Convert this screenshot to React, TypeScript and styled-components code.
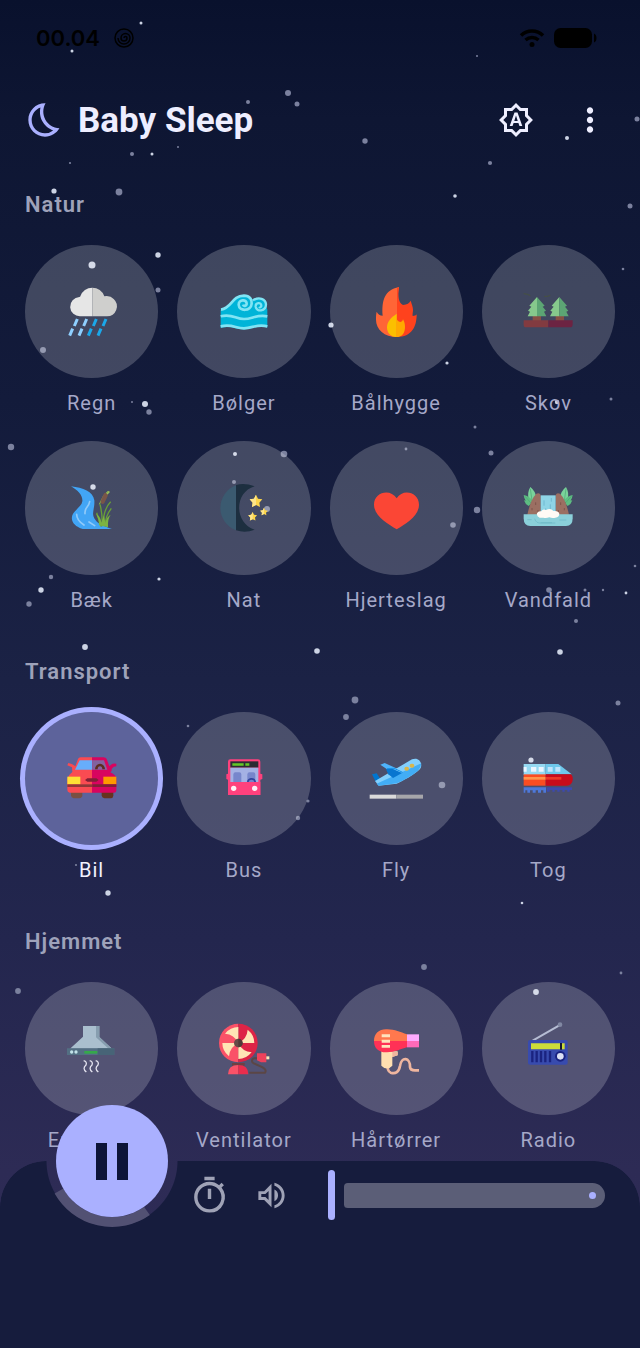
import React, { useState } from "react";
import styled, { createGlobalStyle } from "styled-components";
import {
  MdMoreVert,
  MdOutlineBedtime,
  MdOutlineBrightnessAuto,
  MdOutlineTimer,
  MdOutlineVolumeUp,
} from "react-icons/md";

const GlobalStyle = createGlobalStyle`
  * { box-sizing: border-box; }
  body { margin: 0; background: #161c3d; }
  button { font: inherit; color: inherit; background: none; border: 0; padding: 0; cursor: pointer; }
`;

const Screen = styled.div`
  position: relative;
  display: flex;
  flex-direction: column;
  min-height: 100vh;
  overflow: hidden;
  font-family: Roboto, sans-serif;
  color: #eeeeff;
  background: linear-gradient(
    180deg,
    #09112d 0,
    #0e1633 120px,
    #131b3b 400px,
    #1b2245 680px,
    #23264e 940px,
    #2d2b55 1170px,
    #302c58 100%
  );
`;

const Sky = styled.svg`
  position: absolute;
  inset: 0;
  width: 100%;
  height: 100%;
  pointer-events: none;
`;

const StatusBar = styled.div`
  position: relative;
  display: flex;
  align-items: center;
  gap: 14px;
  height: 76px;
  padding: 0 43px 0 36px;
  color: #000;
`;

const Clock = styled.time`
  font: 600 22px/28px Inter, sans-serif;
`;

const StatusIcons = styled.div`
  display: flex;
  align-items: center;
  gap: 9px;
  margin-left: auto;
`;

const Header = styled.header`
  position: relative;
  display: flex;
  align-items: center;
  height: 88px;
  padding: 0 26px 0 25px;
`;

const Brand = styled.div`
  display: flex;
  align-items: center;
  gap: 13px;
  flex: 1;
  svg { color: #aab0ff; }
`;

const Title = styled.h1`
  margin: 0;
  padding-top: 2px;
  font-size: 35px;
  line-height: 44px;
  font-weight: 700;
`;

const HeaderActions = styled.div`
  display: flex;
  gap: 26px;
`;

const IconButton = styled.button<{ $muted?: boolean }>`
  display: grid;
  place-items: center;
  width: 48px;
  height: 48px;
  color: ${(p) => (p.$muted ? "#9fa2b6" : "#eeeeff")};
`;

const Library = styled.main`
  position: relative;
  display: flex;
  flex-direction: column;
  flex: 1;
  gap: 44px;
  padding: 26px 25px 8px;
`;

const SectionTitle = styled.h2`
  margin: 0 0 25px;
  font-size: 22px;
  line-height: 30px;
  font-weight: 600;
  letter-spacing: 1px;
  color: #9ea2ba;
`;

const SoundGrid = styled.div`
  display: grid;
  grid-template-columns: repeat(4, minmax(0, 1fr));
  gap: 25px 19px;
`;

const Disc = styled.span<{ $active: boolean }>`
  display: grid;
  place-items: center;
  width: 100%;
  aspect-ratio: 1;
  border-radius: 50%;
  background: ${(p) => (p.$active ? "#5d639b" : "rgba(255, 255, 255, 0.2)")};
  box-shadow: ${(p) => (p.$active ? "0 0 0 5px #aab0ff" : "none")};
`;

const SoundLabel = styled.span<{ $active: boolean }>`
  font-size: 20px;
  line-height: 26px;
  letter-spacing: 1px;
  color: ${(p) => (p.$active ? "#f2f2ff" : "#a5a8c8")};
`;

const SoundTile = styled.button`
  display: flex;
  flex-direction: column;
  align-items: center;
  gap: 12px;
`;

const Player = styled.footer`
  position: relative;
  display: flex;
  align-items: center;
  height: 187px;
  padding: 0 35px 119px 185px;
  &::before {
    content: "";
    position: absolute;
    inset: 0;
    border-radius: 46px 46px 0 0;
    background: #161c3d;
    mask: radial-gradient(circle at 112px 0, transparent 65px, #000 66px);
  }
`;

const Controls = styled.div`
  position: relative;
  display: flex;
  align-items: center;
  gap: 14px;
  flex: 1;
`;

const PauseDock = styled.div`
  position: absolute;
  left: 46px;
  top: -66px;
  display: grid;
  place-items: center;
  width: 132px;
  height: 132px;
`;

const Progress = styled.svg`
  position: absolute;
  inset: 0;
`;

const PauseButton = styled.button`
  position: relative;
  display: grid;
  place-items: center;
  width: 112px;
  height: 112px;
  border-radius: 50%;
  background: #aab0ff;
  color: #0d1438;
`;

const Slider = styled.label`
  display: grid;
  align-items: center;
  flex: 1;
  margin-left: 19px;
  > * { grid-area: 1 / 1; }
`;

const Track = styled.span`
  display: flex;
  align-items: center;
  justify-content: flex-end;
  height: 25px;
  margin-left: 16px;
  padding-right: 9px;
  border-radius: 4px 13px 13px 4px;
  background: #5b5e77;
`;

const StopDot = styled.span`
  width: 7px;
  height: 7px;
  border-radius: 50%;
  background: #aab0ff;
`;

const Range = styled.input`
  appearance: none;
  position: relative;
  width: 100%;
  height: 50px;
  margin: 0;
  background: transparent;
  &::-webkit-slider-thumb {
    appearance: none;
    width: 7px;
    height: 50px;
    border-radius: 4px;
    background: #aab0ff;
  }
`;

// Each star: x, y, radius, bright (1) or faint (0)
const STARS: [number, number, number, 0 | 1][] = [
  [141, 23, 1.5, 1], [72, 51, 1.5, 1], [477, 56, 1, 0], [288, 93, 3, 0], [297, 104, 2.5, 0],
  [248, 102, 2, 0], [365, 141, 2.7, 0], [567, 138, 2, 1], [490, 163, 2.1, 0], [637, 119, 2.5, 0],
  [132, 154, 2, 0], [152, 154, 1.5, 1], [178, 147, 1, 0], [70, 163, 1.1, 0], [54, 191, 2.6, 1],
  [119, 192, 3.4, 0], [455, 196, 1.8, 1], [630, 206, 2.5, 0], [92, 265, 3.5, 1],
  [158, 255, 2.7, 1], [158, 290, 2.5, 0], [43, 350, 3, 0], [132, 402, 1, 0], [145, 404, 3, 1],
  [149, 412, 2.7, 0], [331, 325, 2.6, 1], [447, 363, 1.6, 1], [557, 402, 2.2, 1],
  [611, 399, 1.5, 0], [475, 427, 1.5, 0], [623, 269, 1.3, 0], [11, 447, 3.2, 0],
  [235, 454, 2, 1], [284, 454, 3.3, 0], [234, 482, 2, 0], [93, 487, 2.7, 1], [267, 509, 3, 0],
  [159, 579, 1.6, 1], [51, 577, 2.2, 0], [41, 590, 2.7, 1], [29, 604, 2.7, 0],
  [406, 449, 1.4, 0], [491, 453, 2.5, 0], [477, 510, 3.2, 0], [453, 525, 2.8, 0],
  [549, 590, 2.8, 0], [585, 590, 1.5, 0], [603, 590, 1.2, 0], [626, 593, 1.4, 1],
  [576, 621, 2, 0], [635, 566, 1.3, 0], [85, 647, 2.9, 1], [317, 651, 2.8, 1],
  [188, 726, 1.3, 0], [308, 801, 1.6, 0], [298, 818, 2.2, 0], [76, 865, 1.1, 0],
  [108, 893, 2.7, 1], [560, 652, 2.8, 1], [355, 700, 3.4, 0], [346, 717, 2.9, 0],
  [618, 703, 2.5, 0], [442, 785, 3.3, 0], [531, 760, 2.6, 1], [522, 903, 1.3, 1],
  [18, 991, 2.9, 0], [424, 967, 2.9, 0], [621, 973, 1.4, 0], [536, 992, 2.9, 1],
];

const StarSky = () => (
  <Sky viewBox="0 0 640 1348" preserveAspectRatio="xMidYMin slice" aria-hidden="true">
    {STARS.map(([x, y, r, bright]) => (
      <circle key={`${x}-${y}`} cx={x} cy={y} r={r} fill={bright ? "#ccd3e4" : "#7b819e"} />
    ))}
  </Sky>
);

const Art = ({ x, y, children }: { x: number; y: number; children: React.ReactNode }) => (
  <svg width="60" height="60" viewBox={`${x - 90} ${y - 90} 180 180`} aria-hidden="true">
    {children}
  </svg>
);

const Rain = () => (
  <Art x={215} y={215}>
    <path d="M180 228a29 29 0 1 1-3-58q3 0 3-2a38 38 0 0 1 36-26v86z" fill="#e6e6e6" />
    <path d="M216 142a38 38 0 0 1 36 26q18-3 28 8a30 30 0 0 1-20 52h-44z" fill="#cfcfcd" />
    <g strokeWidth="9">
      <path d="M171 236l-9 21M199 236l-9 21M157 265l-9 21M185 265l-9 21" stroke="#8fd0ff" />
      <path d="M228 236l-9 21M257 236l-9 21M213 265l-9 21M242 265l-9 21" stroke="#1ba8ea" />
    </g>
  </Art>
);

const Waves = () => (
  <Art x={672} y={215}>
    <path d="M602 208c34-6 34-41 70-42 14 0 22 6 28 14 18-10 38-4 38 16l4 12v53c-35-8-45 6-70 6s-36-12-70-5z" fill="#00b4d8" />
    <g fill="none" stroke="#80e4f4" strokeWidth="8">
      <path d="M603 208c34-5 31-41 69-42 18 0 24 12 23 24-2 24-38 24-39 3 0-16 25-18 24-2-1 6-9 8-11 2" />
      <path d="M699 180c18-12 38-4 39 12 0 22-29 24-31 7-1-12 17-15 17-2-1 4-5 5-7 3" strokeWidth="7" />
      <path d="M602 228c35-9 44 8 70 8s36-14 70-8" />
      <path d="M602 258c35-8 44 6 70 6s36-14 70-6" />
    </g>
  </Art>
);

const Fire = () => (
  <Art x={213} y={215}>
    <path d="M216 290c-38 0-63-23-63-52 0-10 0-16 2-24 4 8 10 12 18 12-3-43 4-77 49-86-4 18-4 30-3 38z" fill="#ff6536" />
    <path d="M216 290V144l6-4c-4 30-1 48 12 54 12-1 20-6 23-13 3 10 7 18 7 28 0 7-2 12-1 18 6 0 10-2 12-5 0 38-15 68-59 68z" fill="#ff421d" />
    <path d="M214 290c-18 0-28-13-28-29 0-18 13-30 29-41v70z" fill="#fbbf00" />
    <path d="M214 290v-70c-2 14 3 23 13 25 4-1 6-4 7-8 4 6 6 15 6 22 0 18-8 31-26 31z" fill="#ffa900" />
  </Art>
);

const Forest = () => (
  <Art x={670} y={215}>
    <path d="M597 160l12 2 8 4M659 168h10l8-3" stroke="#475240" strokeWidth="3" fill="none" />
    <path d="M624 226h25v16h-25zM693 226h25v16h-25z" fill="#875044" />
    <path d="M597 240h74v21h-70q-4-2-4-8z" fill="#823b40" />
    <path d="M671 240h73v14q-1 6-5 7h-68z" fill="#6c2342" />
    {[0, 67].map((dx) => (
      <g key={dx} transform={`translate(${dx} 0)`}>
        <path d="M637 170l-23 26 6 3-10 12 6 3-7 14h28z" fill="#86c98c" />
        <path d="M637 170l23 26-6 3 10 12-6 3 7 14h-28z" fill="#5ca574" />
      </g>
    ))}
  </Art>
);

const Brook = () => (
  <Art x={216} y={218}>
    <path d="M153 153c36 4 66 16 70 42 2 28-12 40 4 60 8 12 30 20 49 26h-88c-24-8-37-23-31-41 6-16 28-26 30-42 2-18-14-33-34-45z" fill="#42a5f5" />
    <path d="M209 199c-3 18-16 16-14 36M170 237c0 16 9 24 22 32M207 260l17 11" fill="none" stroke="#90caf9" strokeWidth="5" strokeLinecap="round" />
    <path d="M230 232l14 42M240 207q8 30 6 66M272 199c-16 16-22 38-23 70M274 219c-14 18-18 32-19 52" fill="none" stroke="#689f38" strokeWidth="4" />
    <path d="M227 236c8 8 10 24 10 34l27 6c-1-18 2-30 8-38-12 7-14 18-16 24l-4-22-8 22c-1-14-8-22-17-26z" fill="#7cb342" />
    <path d="M238 207l14-28 12-11" stroke="#8bc34a" strokeWidth="3" fill="none" />
    <path d="M248 199l9-20" stroke="#795548" strokeWidth="13" strokeLinecap="round" />
    <path d="M261 176l7-8" stroke="#9bbf5a" strokeWidth="5" />
  </Art>
);

const starPath = "M0-19l6 12 13 2-9 10 2 13L0 12l-12 6 2-13-9-10 13-2z";

const Night = () => (
  <Art x={672} y={218}>
    <path d="M648 150a72 72 0 0 0 0 135z" fill="#3b5a70" />
    <path d="M648 149q26-7 56 4c-62 18-62 110 0 130q-28 11-56 2z" fill="#1d2f40" />
    {[[708, 197, 1], [732, 229, 0.6], [698, 243, 0.7]].map(([x, y, s]) => (
      <g key={x} transform={`translate(${x} ${y}) scale(${s})`}>
        <path d={starPath} fill="#fdd64b" />
        <path d="M0-19v31l-12 6 2-13-9-10 13-2z" fill="#ffe68a" />
      </g>
    ))}
  </Art>
);

const Heart = () => (
  <Art x={212} y={218}>
    <path d="M214 282c-26-16-68-40-68-74 0-37 48-50 68-19 19-31 67-18 67 19 0 34-40 58-67 74z" fill="#fb4635" />
  </Art>
);

const Waterfall = () => (
  <Art x={670} y={218}>
    {[false, true].map((flip) => (
      <g key={String(flip)} transform={flip ? "translate(1341 0) scale(-1 1)" : undefined}>
        <path d="M612 192q-5-20 5-37 18 14 17 34l-12 10z" fill="#7ad39b" />
        <path d="M614 206q-15-10-17-27 17 3 27 18zM612 212q-11-6-14-17 12 0 22 9z" fill="#5dbd82" />
        <path d="M617 160l5 36M601 183l16 18" stroke="#4ca672" strokeWidth="2" />
        <path d="M608 238c6-25 12-48 27-63 8-4 13 0 13 8v58z" fill="#9b6f62" />
        <path d="M622 218v7M633 201v8M640 224v6" stroke="#7e554d" strokeWidth="3" />
      </g>
    ))}
    <path d="M648 180h45v57h-45z" fill="#8ed4e6" />
    <path d="M658 195v16M680 188v11M677 207v14M663 219v9" stroke="#62aec8" strokeWidth="2" />
    <path d="M597 237h147v12q0 23-20 23H617q-20 0-20-23z" fill="#8bd0da" />
    <path d="M630 250q4 15 20 13h42M608 253h13M704 254h21M648 262h34" stroke="#69b6c5" strokeWidth="2" fill="none" />
    <path d="M645 247q-10-4-8-13 4-8 13-6 4-8 14-4 14-7 22 3 15-2 18 8 0 10-12 12-9 2-18-1-10 4-18 1z" fill="#fffaf5" />
  </Art>
);

const Car = () => (
  <Art x={230} y={416}>
    <path d="M167 458h34v13q-3 6-9 6h-17q-8-2-8-9z" fill="#785043" />
    <path d="M259 458h35v11q-1 8-8 8h-19q-8-2-8-9z" fill="#65331f" />
    <path d="M230 354v106h-67q-7-1-7-8v-34q3-11 15-20l-1-14-14-6 3-7q12 2 17 7l4 3 8-22q2-5 8-5z" fill="#fa4b52" />
    <path d="M230 354h34q8 0 10 5l8 22 5-5q6-5 16-3v8q-8 0-14 7v6l-4 5q18 8 18 20v33q0 8-7 8h-66z" fill="#d8045f" />
    <path d="M193 363h38v28h-52z" fill="#67adfb" />
    <path d="M231 363h35l10 28h-45z" fill="#82639f" />
    <path d="M243 390a11 13 0 0 1 22 0" stroke="#5d2d1e" strokeWidth="8" fill="none" />
    <path d="M156 412h39v23h-39z" fill="#ffdf35" />
    <path d="M264 412h39v23h-39z" fill="#ff9900" />
    <path d="M156 435h75v8h-75z" fill="#8f3838" />
    <path d="M231 435h72v8h-72zM216 417h27l7 5-7 5h-27l-7-5z" fill="#802036" />
  </Art>
);

const Bus = () => (
  <Art x={686} y={416}>
    <path d="M645 360h83q7 0 7 7v36l6 2v14l-6 2v46h-97v-46l-5-2v-14l5-2v-36q0-7 7-7z" fill="#ff417d" />
    <path d="M645 366h84v19h-84z" fill="#2c2c33" />
    <path d="M651 372h34v7h-34zM690 372h12v7h-12z" fill="#65c728" />
    <path d="M645 385h84v43h-84z" fill="#a4b1e4" />
    <path d="M654 428v-23q1-6 6-6h12q6 0 6 6v23zM696 428v-23q1-6 6-6h12q6 0 6 6v23z" fill="#7786cc" />
    <path d="M697 428a12 13 0 0 1 23 0" stroke="#31439e" strokeWidth="5" fill="none" />
    <path d="M638 428h97v39h-97z" fill="#ff417d" />
    <circle cx="655" cy="447" r="8" fill="#fff0f7" />
    <circle cx="718" cy="447" r="8" fill="#fff0f7" />
  </Art>
);

const Plane = () => (
  <Art x={213} y={415}>
    <path d="M166 375l13-5 58 26-17 15z" fill="#4fb4fb" />
    <path d="M141 404l14-3 13 20-16 5z" fill="#0075cf" />
    <path d="M150 424l111-65c23-10 36 18 22 31-18 17-48 32-68 42l-54 6z" fill="#82cffd" />
    <path d="M155 432l134-61q-1 14-10 22c-20 17-44 29-64 38l-54 7z" fill="#42adf5" />
    <path d="M183 389l14-4 34 15-27 15-14-11z" fill="#0876d0" />
    <path d="M186 387l21-1 26 12" stroke="#1793ea" strokeWidth="3" fill="none" />
    <path d="M244 387h2M260 378h2" stroke="#d9b64b" strokeWidth="12" strokeLinecap="round" />
    <path d="M134 465h80v12h-80z" fill="#dadada" />
    <path d="M214 465h80v12h-80z" fill="#a6a6aa" />
  </Art>
);

const Train = () => (
  <Art x={670} y={415}>
    <path d="M597 373h66v33h-66z" fill="#95d9f2" />
    <path d="M663 373h38l40 31h-78z" fill="#6ec8eb" />
    <path d="M597 382h9v14h-9zM619 382h16v14h-16zM642 382h15v14h-15z" fill="#eaf5ff" />
    <path d="M669 382h15v14h-15zM692 382h15v14h-15z" fill="#c0e5fc" />
    <path d="M597 404h66v34h-66z" fill="#fa4d22" />
    <path d="M663 404h76q8 9 4 22-5 12-18 12h-62z" fill="#c80b1b" />
    <path d="M597 412h66v8h-66z" fill="#ff944b" />
    <path d="M663 412h47v8h-47z" fill="#ec3726" />
    <path d="M597 443h67v16h-8v-7h-7v7h-9v-7h-7v7h-9v-7h-8v7h-8v-7h-6v7h-5z" fill="#4d78d9" />
    <path d="M665 443h77v8h-7v5h-7v-5h-8v5h-7v-5h-8v5h-7v-5h-8v5h-7v-5h-8v5h-8z" fill="#3d4aae" />
  </Art>
);

const Hood = () => (
  <Art x={230} y={386}>
    <path d="M203 320h49v33l38 35H164l39-36z" fill="#aabfce" />
    <path d="M242 320h10v33l38 35h-10l-38-34z" fill="#879eaf" />
    <path d="M155 387h142v20H155z" fill="#536f83" />
    <path d="M247 387h50v20h-50z" fill="#476477" />
    <path d="M207 395h39v8h-39z" fill="#35a94a" />
    <circle cx="169" cy="398" r="5" fill="#c2e2e9" />
    <circle cx="182" cy="398" r="5" fill="#c2e2e9" />
    <path d="M205 424q11 3 7 13-12 10 1 21M223 424q11 3 7 13-12 10 1 21M241 424q11 3 7 13-12 10 1 21" stroke="#e4e3ef" strokeWidth="4" fill="none" />
  </Art>
);

const Fan = () => (
  <Art x={686} y={386}>
    <path d="M650 431h38v8h-38z" fill="#704042" />
    <path d="M733 417h-16q-7 1-7 8 0 6 10 9l22 10q13 8 7 16h-47" stroke="#5b4645" strokeWidth="6" fill="none" />
    <path d="M638 465q0-28 31-28v28z" fill="#fa5268" />
    <path d="M669 437q30 0 30 28h-30z" fill="#e92d4d" />
    <path d="M669 313a58 58 0 0 0 0 116z" fill="#fa5268" />
    <path d="M669 313a58 58 0 0 1 0 116z" fill="#dd2446" />
    {[0, 90, 180, 270].map((a) => (
      <path key={a} transform={`rotate(${a} 669 371)`} d="M669 371V323q-24 0-40 20 28 2 40 28z" fill="#ffe5b5" />
    ))}
    <circle cx="669" cy="371" r="13" fill="#674a48" />
    <path d="M669 358a13 13 0 0 1 0 26z" fill="#513938" />
    <path d="M725 402h28v27h-16l-12-6z" fill="#ee425b" />
    <path d="M753 411h9v9h-9z" fill="#ffe5b5" />
  </Art>
);

const Dryer = () => (
  <Art x={213} y={386}>
    <path d="M190 437q-5 17 7 23 23 7 28-20c4-30 31-26 30 3q1 10 15 10h12" stroke="#efb69f" strokeWidth="8" fill="none" />
    <path d="M169 396h49v12l-16 5v26q-16 17-33 0z" fill="#ffdfb0" />
    <path d="M202 398h16v10l-16 5z" fill="#efb69f" />
    <path d="M147 365c0-22 15-35 36-35 25-1 42 8 63 15v20z" fill="#ff784e" />
    <path d="M147 365h99v19c-20 5-36 15-60 15-25 1-39-12-39-34z" fill="#ff3156" />
    <path d="M246 345h36v20h-36z" fill="#ffabff" />
    <path d="M246 365h36v19h-36z" fill="#ff6ab9" />
    <path d="M170 345h25v9h-25zM170 361h25v9h-25zM170 377h25v8h-25z" fill="#ffe4bd" />
  </Art>
);

const Radio = () => (
  <Art x={671} y={386}>
    <path d="M625 364l80-46" stroke="#b6bdd3" strokeWidth="6" />
    <circle cx="707" cy="316" r="7" fill="#8188a3" />
    <rect x="611" y="362" width="119" height="74" rx="6" fill="#384bae" />
    <path d="M620 372h101v18H620z" fill="#cddc39" />
    <path d="M707 371h6v20h-6z" fill="#151a34" />
    <path d="M624 395v34M637 395v34M650 395v34M663 395v34M677 395v34" stroke="#1a2380" strokeWidth="7" />
    <circle cx="708" cy="411" r="16" fill="#1a2380" />
    <circle cx="708" cy="411" r="10" fill="#dce0f4" />
  </Art>
);

type Sound = { name: string; icon: React.ComponentType };

const SECTIONS: { title: string; sounds: Sound[] }[] = [
  {
    title: "Natur",
    sounds: [
      { name: "Regn", icon: Rain },
      { name: "Bølger", icon: Waves },
      { name: "Bålhygge", icon: Fire },
      { name: "Skov", icon: Forest },
      { name: "Bæk", icon: Brook },
      { name: "Nat", icon: Night },
      { name: "Hjerteslag", icon: Heart },
      { name: "Vandfald", icon: Waterfall },
    ],
  },
  {
    title: "Transport",
    sounds: [
      { name: "Bil", icon: Car },
      { name: "Bus", icon: Bus },
      { name: "Fly", icon: Plane },
      { name: "Tog", icon: Train },
    ],
  },
  {
    title: "Hjemmet",
    sounds: [
      { name: "Emhætte", icon: Hood },
      { name: "Ventilator", icon: Fan },
      { name: "Hårtørrer", icon: Dryer },
      { name: "Radio", icon: Radio },
    ],
  },
];

const SpiralIcon = () => (
  <svg width="20" height="20" viewBox="0 0 40 40" fill="none" stroke="currentColor" strokeWidth="3" aria-hidden="true">
    <circle cx="20" cy="20" r="18" />
    <path d="M20 20a3 3 0 0 1 6 0 6 6 0 0 1-12 0 9 9 0 0 1 18 0 12 12 0 0 1-24 0" />
  </svg>
);

const WifiIcon = () => (
  <svg width="26" height="20" viewBox="0 0 52 40" aria-hidden="true">
    <path d="M4 15a32 32 0 0 1 44 0M13 24a20 20 0 0 1 26 0" fill="none" stroke="currentColor" strokeWidth="7" />
    <circle cx="26" cy="33" r="5" fill="currentColor" />
  </svg>
);

const BatteryIcon = () => (
  <svg width="43" height="20" viewBox="0 0 86 40" fill="currentColor" aria-hidden="true">
    <rect width="76" height="40" rx="13" />
    <path d="M80 11q5 2 5 9t-5 9z" />
  </svg>
);

export default function App() {
  const [active, setActive] = useState("Bil");
  const [volume, setVolume] = useState(0);

  return (
    <>
      <GlobalStyle />
      <Screen>
        <StarSky />
        <StatusBar>
          <Clock>00.04</Clock>
          <SpiralIcon />
          <StatusIcons>
            <WifiIcon />
            <BatteryIcon />
          </StatusIcons>
        </StatusBar>
        <Header>
          <Brand>
            <MdOutlineBedtime size={40} aria-hidden="true" />
            <Title>Baby Sleep</Title>
          </Brand>
          <HeaderActions>
            <IconButton aria-label="Automatisk lysstyrke">
              <MdOutlineBrightnessAuto size={36} />
            </IconButton>
            <IconButton aria-label="Flere valg">
              <MdMoreVert size={38} />
            </IconButton>
          </HeaderActions>
        </Header>
        <Library>
          {SECTIONS.map((section) => (
            <section key={section.title}>
              <SectionTitle>{section.title}</SectionTitle>
              <SoundGrid>
                {section.sounds.map(({ name, icon: Icon }) => (
                  <SoundTile key={name} aria-pressed={active === name} onClick={() => setActive(name)}>
                    <Disc $active={active === name}>
                      <Icon />
                    </Disc>
                    <SoundLabel $active={active === name}>{name}</SoundLabel>
                  </SoundTile>
                ))}
              </SoundGrid>
            </section>
          ))}
        </Library>
        <Player>
          <PauseDock>
            <Progress viewBox="0 0 132 132" aria-hidden="true">
              <path d="M13 96A61 61 0 0 0 101 116" fill="none" stroke="#525173" strokeWidth="10" />
            </Progress>
            <PauseButton aria-label="Pause">
              <svg width="32" height="37" viewBox="0 0 32 37" fill="currentColor" aria-hidden="true">
                <path d="M0 0h11v37H0zM21 0h11v37H21z" />
              </svg>
            </PauseButton>
          </PauseDock>
          <Controls>
            <IconButton $muted aria-label="Timer">
              <MdOutlineTimer size={41} />
            </IconButton>
            <IconButton $muted aria-label="Lydstyrke">
              <MdOutlineVolumeUp size={35} />
            </IconButton>
            <Slider>
              <Track>
                <StopDot />
              </Track>
              <Range
                type="range"
                min={0}
                max={100}
                value={volume}
                aria-label="Lydstyrke"
                onChange={(e) => setVolume(Number(e.target.value))}
              />
            </Slider>
          </Controls>
        </Player>
      </Screen>
    </>
  );
}
